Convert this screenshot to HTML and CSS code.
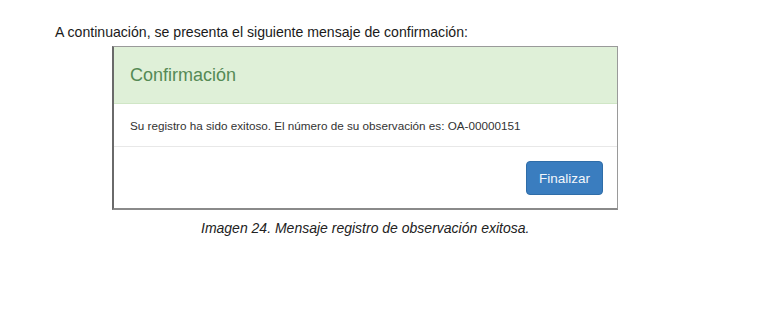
FILE: index.html
```html
<!DOCTYPE html>
<html lang="es">
<head>
<meta charset="utf-8">
<link rel="stylesheet" href="styles.css">
</head>
<body>
<div class="page">
  <p class="intro">A continuación, se presenta el siguiente mensaje de confirmación:</p>
  <div class="figure">
    <div class="modal">
      <div class="modal-header">Confirmación</div>
      <div class="modal-body">Su registro ha sido exitoso. El número de su observación es: OA-00000151</div>
      <div class="modal-footer"><button class="btn">Finalizar</button></div>
    </div>
  </div>
  <p class="caption">Imagen 24. Mensaje registro de observación exitosa.</p>
</div>
</body>
</html>
```
FILE: styles.css
```css
html, body {
  margin: 0;
  padding: 0;
  background: #fff;
}
.page {
  font-family: "Liberation Sans", Arial, sans-serif;
  color: #1a1a1a;
  padding-top: 23px;
}
.intro {
  margin: 0 0 0 55px;
  font-size: 14.1px;
  line-height: 18px;
}
.figure {
  margin: 5px 0 0 112px;
  width: 506px;
}
.modal {
  border: 1px solid #9a9a9a;
  border-left: 2px solid #6a6a6a;
  border-bottom: 2px solid #8a8a8a;
  background: #fff;
}
.modal-header {
  background: #dff0d8;
  color: #558a55;
  font-size: 18px;
  line-height: 20px;
  padding: 18px 16px 18px 16px;
  border-bottom: 1px solid #d0e6c6;
}
.modal-body {
  font-size: 11.7px;
  line-height: 14px;
  padding: 15px 16px 13px 16px;
  color: #333;
  border-bottom: 1px solid #e8e8e8;
}
.modal-footer {
  display: flex;
  justify-content: flex-end;
  padding: 14px 14px 13px 0;
}
.btn {
  font-family: "Liberation Sans", Arial, sans-serif;
  font-size: 13.5px;
  color: #f2f6fb;
  background: #3a7dbf;
  border: 1px solid #2f6da8;
  border-radius: 4px;
  width: 77px;
  height: 34px;
  padding: 0;
}
.caption {
  margin: 10px 0 0 0;
  padding-left: 201px;
  font-size: 14px;
  font-style: italic;
  color: #222;
}
```
